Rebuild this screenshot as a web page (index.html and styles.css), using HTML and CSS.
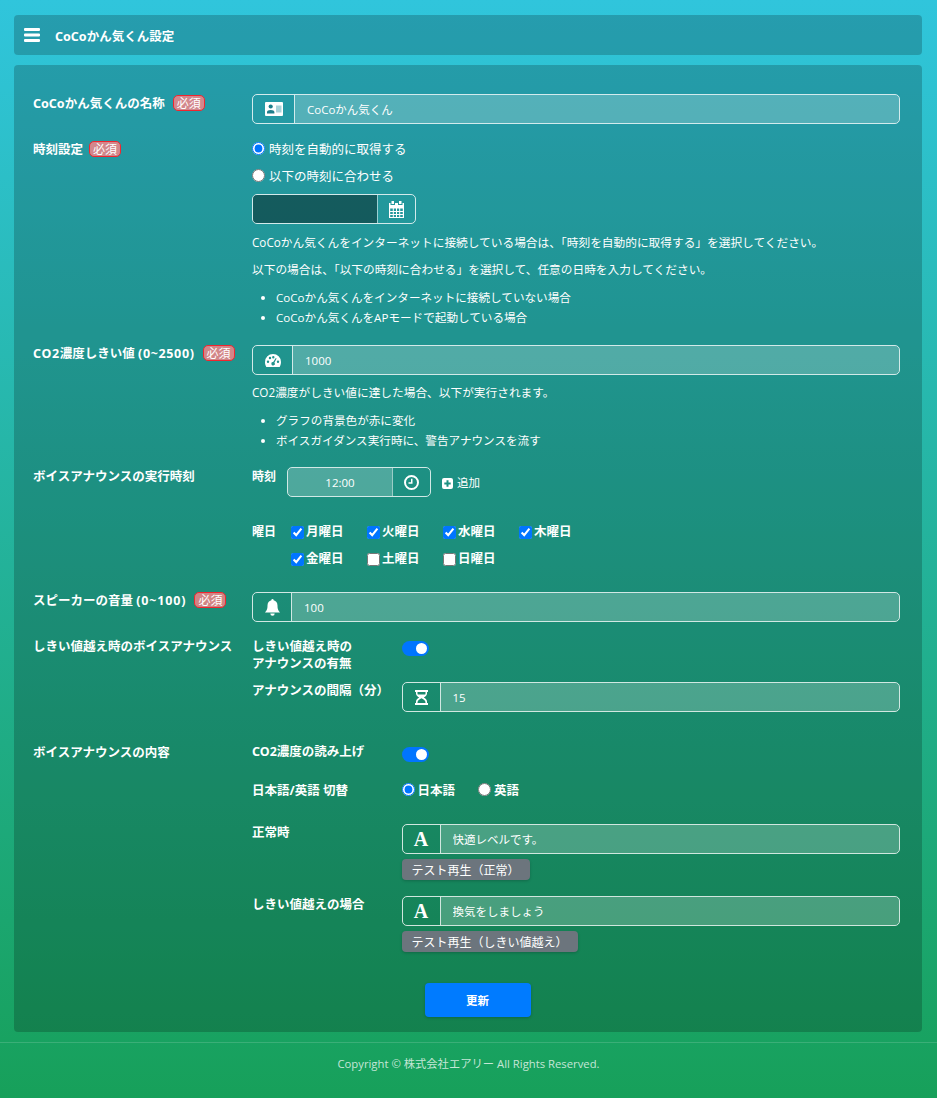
FILE: index.html
```html
<!DOCTYPE html>
<html lang="ja">
<head>
<meta charset="utf-8">
<title>CoCoかん気くん設定</title>
<link rel="stylesheet" href="styles.css">
</head>
<body>
<nav class="navbar">
  <svg class="burger" width="16" height="14" viewBox="0 0 16 14"><path d="M1 0h14a1 1 0 0 1 1 1v1a1 1 0 0 1-1 1H1a1 1 0 0 1-1-1V1a1 1 0 0 1 1-1zM1 5.500h14a1 1 0 0 1 1 1v1a1 1 0 0 1-1 1H1a1 1 0 0 1-1-1v-1a1 1 0 0 1 1-1zM1 11h14a1 1 0 0 1 1 1v1a1 1 0 0 1-1 1H1a1 1 0 0 1-1-1v-1a1 1 0 0 1 1-1z" fill="#fff"/></svg>
  <span class="brand">CoCoかん気くん設定</span>
</nav>
<main class="card">
  <section class="row row-name">
    <div class="label">CoCoかん気くんの名称<span class="req">必須</span></div>
    <div class="group">
      <span class="addon w42"><svg width="18" height="14" viewBox="0 0 18 14"><rect width="18" height="14" rx="1" fill="#fff"/><circle cx="5.700" cy="4.500" r="2.100" fill="#1f7f8c"/><path d="M2 11.500V10c0-1.300 1.500-2 3.700-2s3.700.7 3.700 2v1.500z" fill="#1f7f8c"/><path d="M11 3.500h5.500v7H11z" fill="#a9d3da"/></svg></span>
      <input class="field f-name" type="text" value="CoCoかん気くん">
    </div>
  </section>

  <section class="row row-time">
    <div class="label">時刻設定<span class="req">必須</span></div>
    <div>
      <label class="radio-line"><input type="radio" name="clock" checked>時刻を自動的に取得する</label>
      <label class="radio-line second"><input type="radio" name="clock">以下の時刻に合わせる</label>
      <div class="group date-group">
        <input class="field dark" type="text">
        <span class="addon end w38"><svg width="15" height="17" viewBox="0 0 15 17"><path fill="#fff" fill-rule="evenodd" d="M2.500 0h2.500v3H2.500zm7.500 0h2.500v3H10zM0 2h1.500v2h4.500V2h3v2h4.500V2H15v15H0zm1.200 5.500V10h2.600V7.500zm3.600 0V10h2.200V7.500zm3.200 0V10h2.200V7.500zm3.200 0V10h2.600V7.500zM1.200 11v2h2.600v-2zm3.600 0v2h2.200v-2zm3.200 0v2h2.200v-2zm3.200 0v2h2.600v-2zM1.200 14v2h2.600v-2zm3.600 0v2h2.200v-2zm3.200 0v2h2.200v-2zm3.200 0v2h2.600v-2z"/></svg></span>
      </div>
      <p class="note first">CoCoかん気くんをインターネットに接続している場合は、「時刻を自動的に取得する」を選択してください。</p>
      <p class="note">以下の場合は、「以下の時刻に合わせる」を選択して、任意の日時を入力してください。</p>
      <ul class="list">
        <li>CoCoかん気くんをインターネットに接続していない場合</li>
        <li>CoCoかん気くんをAPモードで起動している場合</li>
      </ul>
    </div>
  </section>

  <section class="row row-co2">
    <div class="label"><span class="latin">CO2</span>濃度しきい値 <span class="latin">(0~2500)</span><span class="req">必須</span></div>
    <div>
      <div class="group">
        <span class="addon w40"><svg width="16" height="13" viewBox="0 0 16 13"><path fill="#fff" fill-rule="evenodd" d="M8 0a8 8 0 0 1 8 8c0 1.800-.5 3.500-1.300 5H1.300A8.300 8.300 0 0 1 0 8a8 8 0 0 1 8-8zM3 6.500a1.200 1.200 0 1 0 0 2.400 1.200 1.200 0 0 0 0-2.400zM5 2.800a1.200 1.200 0 1 0 0 2.400 1.200 1.200 0 0 0 0-2.400zM8.300 2a1.200 1.200 0 1 0 0 2.400 1.200 1.200 0 0 0 0-2.400zM13 6.500a1.200 1.200 0 1 0 0 2.400 1.200 1.200 0 0 0 0-2.400zM10.800 4 8.200 8.100a1.700 1.700 0 1 0 1.200.6L11.600 4.400z"/></svg></span>
        <input class="field f-co2" type="text" value="1000">
      </div>
      <p class="note co2-note">CO2濃度がしきい値に達した場合、以下が実行されます。</p>
      <ul class="list co2-list">
        <li>グラフの背景色が赤に変化</li>
        <li>ボイスガイダンス実行時に、警告アナウンスを流す</li>
      </ul>
    </div>
  </section>

  <section class="row row-voice">
    <div class="label">ボイスアナウンスの実行時刻</div>
    <div>
      <div class="time-line">
        <span class="sublabel tight">時刻</span>
        <div class="group time-group">
          <input class="field center f-time" type="text" value="12:00">
          <span class="addon end w38"><svg width="15" height="15" viewBox="0 0 15 15"><path fill="#fff" fill-rule="evenodd" d="M7.500 0a7.500 7.500 0 1 1 0 15 7.500 7.500 0 0 1 0-15zm0 2a5.500 5.500 0 1 0 0 11 5.500 5.500 0 0 0 0-11zM7 3.800h1.500v5H4.500V7.300H7z"/></svg></span>
        </div>
        <span class="add"><svg width="11" height="11" viewBox="0 0 11 11"><path fill="#fff" fill-rule="evenodd" d="M2 0h7a2 2 0 0 1 2 2v7a2 2 0 0 1-2 2H2a2 2 0 0 1-2-2V2a2 2 0 0 1 2-2zm2.500 2.300v2.200H2.300v2h2.200v2.200h2V6.500h2.200v-2H6.500V2.300z"/></svg>追加</span>
      </div>
      <div class="days-line">
        <span class="sublabel tight">曜日</span>
        <div class="days">
          <label class="day"><input type="checkbox" checked>月曜日</label>
          <label class="day"><input type="checkbox" checked>火曜日</label>
          <label class="day"><input type="checkbox" checked>水曜日</label>
          <label class="day"><input type="checkbox" checked>木曜日</label>
          <label class="day"><input type="checkbox" checked>金曜日</label>
          <label class="day"><input type="checkbox">土曜日</label>
          <label class="day"><input type="checkbox">日曜日</label>
        </div>
      </div>
    </div>
  </section>

  <section class="row row-speaker">
    <div class="label">スピーカーの音量 <span class="latin wide">(0~100)</span><span class="req">必須</span></div>
    <div class="group">
      <span class="addon w39"><svg width="15" height="17" viewBox="0 0 15 17"><path fill="#fff" d="M7.500 0a1.100 1.100 0 0 1 1.100 1.200C11 1.700 12.500 3.600 12.500 6.500c0 4 1 5.300 2.500 7H0c1.500-1.700 2.500-3 2.500-7 0-2.900 1.500-4.800 3.900-5.300A1.100 1.100 0 0 1 7.500 0zM5.300 14.500h4.400a2.200 2.200 0 0 1-4.400 0z"/></svg></span>
      <input class="field f-speaker" type="text" value="100">
    </div>
  </section>

  <section class="row row-threshold">
    <div class="label">しきい値越え時のボイスアナウンス</div>
    <div>
      <div class="sub-row">
        <div class="sublabel two-line">しきい値越え時の<br>アナウンスの有無</div>
        <span class="toggle"></span>
      </div>
      <div class="sub-row interval">
        <div class="sublabel">アナウンスの間隔（分）</div>
        <div class="group">
          <span class="addon w38"><svg width="13" height="15" viewBox="0 0 13 15"><path fill="#fff" fill-rule="evenodd" d="M0 0h13v2h-1v1.500c0 1.800-1.500 3-3.200 4 1.700 1 3.200 2.200 3.200 4V13h1v2H0v-2h1v-1.500c0-1.800 1.500-3 3.200-4C2.500 6.500 1 5.300 1 3.500V2H0zm2.500 2v1.500c0 .4.100.7.300 1h7.400c.2-.3.300-.6.300-1V2zm4 6.300c-2 1-3.200 2-3.800 3.200-.1.500-.2 1-.2 1.500h8c0-.5-.1-1-.2-1.500-.6-1.200-1.800-2.200-3.800-3.200z"/></svg></span>
          <input class="field f-interval" type="text" value="15">
        </div>
      </div>
    </div>
  </section>

  <section class="row row-content">
    <div class="label">ボイスアナウンスの内容</div>
    <div>
      <div class="sub-row read">
        <div class="sublabel">CO2濃度の読み上げ</div>
        <span class="toggle"></span>
      </div>
      <div class="sub-row lang">
        <div class="sublabel">日本語/英語 切替</div>
        <div class="langs">
          <label class="lang-item"><input type="radio" name="lang" checked>日本語</label>
          <label class="lang-item"><input type="radio" name="lang">英語</label>
        </div>
      </div>
      <div class="sub-row normal">
        <div class="sublabel">正常時</div>
        <div>
          <div class="group">
            <span class="addon w38 serif-a">A</span>
            <input class="field f-normal" type="text" value="快適レベルです。">
          </div>
          <button class="test" type="button">テスト再生（正常）</button>
        </div>
      </div>
      <div class="sub-row over">
        <div class="sublabel">しきい値越えの場合</div>
        <div>
          <div class="group">
            <span class="addon w38 serif-a">A</span>
            <input class="field f-over" type="text" value="換気をしましょう">
          </div>
          <button class="test" type="button">テスト再生（しきい値越え）</button>
        </div>
      </div>
    </div>
  </section>

  <div class="submit-wrap"><button class="submit" type="button">更新</button></div>
</main>
<footer class="footer">Copyright © 株式会社エアリー All Rights Reserved.</footer>
</body>
</html>
```
FILE: styles.css
```css
* { box-sizing: border-box; }
html, body { margin: 0; padding: 0; }
body {
  width: 937px;
  height: 1098px;
  overflow: hidden;
  padding: 15px 15px 0 14px;
  background: linear-gradient(180deg, #30c5dc 0%, #17a05a 100%);
  color: #fff;
  font-family: "Open Sans", "Noto Sans CJK JP", sans-serif;
  font-size: 11.500px;
  line-height: 20px;
}
.navbar {
  height: 40px;
  display: flex;
  align-items: center;
  padding-left: 10px;
  gap: 15px;
  background: rgba(0, 0, 0, .2);
  border-radius: 4px;
}
.burger { display: block; }
.brand {
  position: relative;
  top: 2px;
  font: 700 12.500px/20px "Noto Sans", "Noto Sans CJK JP", sans-serif;
}
.card {
  height: 967px;
  margin-top: 10px;
  padding: 29px 22px 0 19px;
  background: rgba(0, 0, 0, .2);
  border-radius: 4px;
}
.row { display: grid; grid-template-columns: 219px 1fr; }
.label {
  font: 700 12.500px/18px "Noto Sans", "Noto Sans CJK JP", sans-serif;
}
.latin { letter-spacing: .65px; }
.latin.wide { letter-spacing: .85px; }
.req {
  display: inline-block;
  margin-left: 8px;
  padding: 0 3px;
  height: 16px;
  line-height: 14px;
  font-size: 12px;
  font-weight: 400;
  font-family: "Noto Sans CJK JP", sans-serif;
  background: rgba(255, 130, 135, .8);
  border: 1px solid #f0262f;
  border-radius: 5px;
  vertical-align: 0;
}
.row-time .req { margin-left: 6px; }
.group {
  display: flex;
  height: 30px;
  border: 1px solid rgba(255, 255, 255, .8);
  border-radius: 5px;
  overflow: hidden;
}
.addon {
  flex: none;
  display: flex;
  align-items: center;
  justify-content: center;
  border-right: 1px solid rgba(255, 255, 255, .8);
}
.addon.end { border-right: 0; border-left: 1px solid rgba(255, 255, 255, .55); }
.w38 { width: 38px; }
.w39 { width: 39px; }
.w40 { width: 40px; }
.w42 { width: 42px; }
.serif-a { font: 700 20px/1 "Liberation Serif", serif; }
.field {
  flex: 1;
  min-width: 0;
  height: 100%;
  padding: 0 12px;
  border: 0;
  outline: 0;
  color: #fff;
  font: 11.500px "Open Sans", "Noto Sans CJK JP", sans-serif;
  background: rgba(255, 255, 255, .22);
}
.field.center { text-align: center; }
.field.dark { background: rgba(0, 0, 0, .4); }

.row-name { margin-bottom: 15px; }
.row-name .label { padding-top: 1px; }
.row-time .label { padding-top: 2px; }

.radio-line { display: flex; align-items: center; height: 20px; font-size: 12.500px; }
.radio-line:first-child { margin-top: 1px; }
.radio-line input, .lang-item input {
  appearance: auto;
  width: 13px;
  height: 13px;
  margin: 0 4px 3px 0;
  accent-color: #0075ff;
  flex: none;
}
.radio-line.second { margin-top: 7px; }
.date-group { width: 164px; margin-top: 7px; }
.note { margin: 0; font-size: 11.700px; }
.note.first { margin-top: 8px; }
.note + .note { margin-top: 7px; }
.list { margin: 9px 0 0; padding-left: 24px; font-size: 11.600px; }
.row-time { margin-bottom: 17px; }
.co2-note { margin-top: 7px; }
.co2-list { margin-top: 9px; }
.row-co2 { margin-bottom: 16px; }
.row-voice .label { padding-top: 1px; }

.time-line { display: flex; align-items: flex-start; }
.sublabel { font: 700 12.500px/18px "Noto Sans", "Noto Sans CJK JP", sans-serif; }
.tight { width: 35px; flex: none; }
.time-line .sublabel { padding-top: 1px; font-size: 12px; }
.time-group { width: 144px; }
.add { display: flex; align-items: center; gap: 4px; margin: 6px 0 0 11px; }
.add svg { display: block; }
.days-line { display: flex; margin-top: 25px; }
.days-line .sublabel { line-height: 20px; padding-right: 4px; font-size: 12px; }
.days { display: grid; grid-template-columns: repeat(4, 76px); row-gap: 7px; padding-left: 4px; }
.day { display: flex; align-items: center; gap: 2px; font-weight: 700; height: 20px; font-size: 12.500px; }
.day input { width: 13px; height: 13px; margin: 0; accent-color: #0075ff; flex: none; }
.row-voice { margin-bottom: 23px; }

.row-speaker { margin-bottom: 16px; }
.sub-row { display: grid; grid-template-columns: 149.500px 1fr; }
.two-line { line-height: 17px; }
.toggle {
  position: relative;
  display: block;
  width: 27px;
  height: 15px;
  margin-top: 3px;
  background: #0075ff;
  border-radius: 8px;
}
.toggle::after {
  content: "";
  position: absolute;
  right: 2px;
  top: 2px;
  width: 11px;
  height: 11px;
  background: #fff;
  border-radius: 50%;
}
.interval { margin-top: 10px; }
.row-threshold { margin-bottom: 30px; }
.row-content .label { padding-top: 2px; }
.read { height: 18px; }
.read .sublabel { padding-top: 1px; }
.read .toggle { margin-top: 5px; }
.lang { margin-top: 21px; height: 20px; }
.lang .sublabel { line-height: 20px; }
.langs { display: flex; gap: 23px; }
.lang-item { display: flex; align-items: center; font-weight: 700; height: 20px; font-size: 12.500px; }
.lang-item input { margin-right: 3px; }
.normal { margin-top: 23px; }
.over { margin-top: 16px; }
.test {
  display: block;
  height: 21px;
  margin-top: 5px;
  padding: 0 10px;
  border: 0;
  color: #fff;
  font: 12px "Open Sans", "Noto Sans CJK JP", sans-serif;
  background: #6c757d;
  border-radius: 4px;
  box-shadow: 0 1px 3px rgba(0, 0, 0, .2);
}
.submit-wrap { display: flex; justify-content: center; margin-top: 31px; padding-left: 22px; }
.submit {
  width: 106px;
  height: 34px;
  border: 0;
  color: #fff;
  font: 700 11.500px "Open Sans", "Noto Sans CJK JP", sans-serif;
  background: #007bff;
  border-radius: 4px;
  box-shadow: 0 1px 3px rgba(0, 0, 0, .2);
}
.footer {
  margin: 10px -15px 0 -14px;
  padding-top: 11px;
  border-top: 1px solid rgba(255, 255, 255, .15);
  text-align: center;
  font-size: 11.300px;
  color: rgba(255, 255, 255, .75);
}
```
